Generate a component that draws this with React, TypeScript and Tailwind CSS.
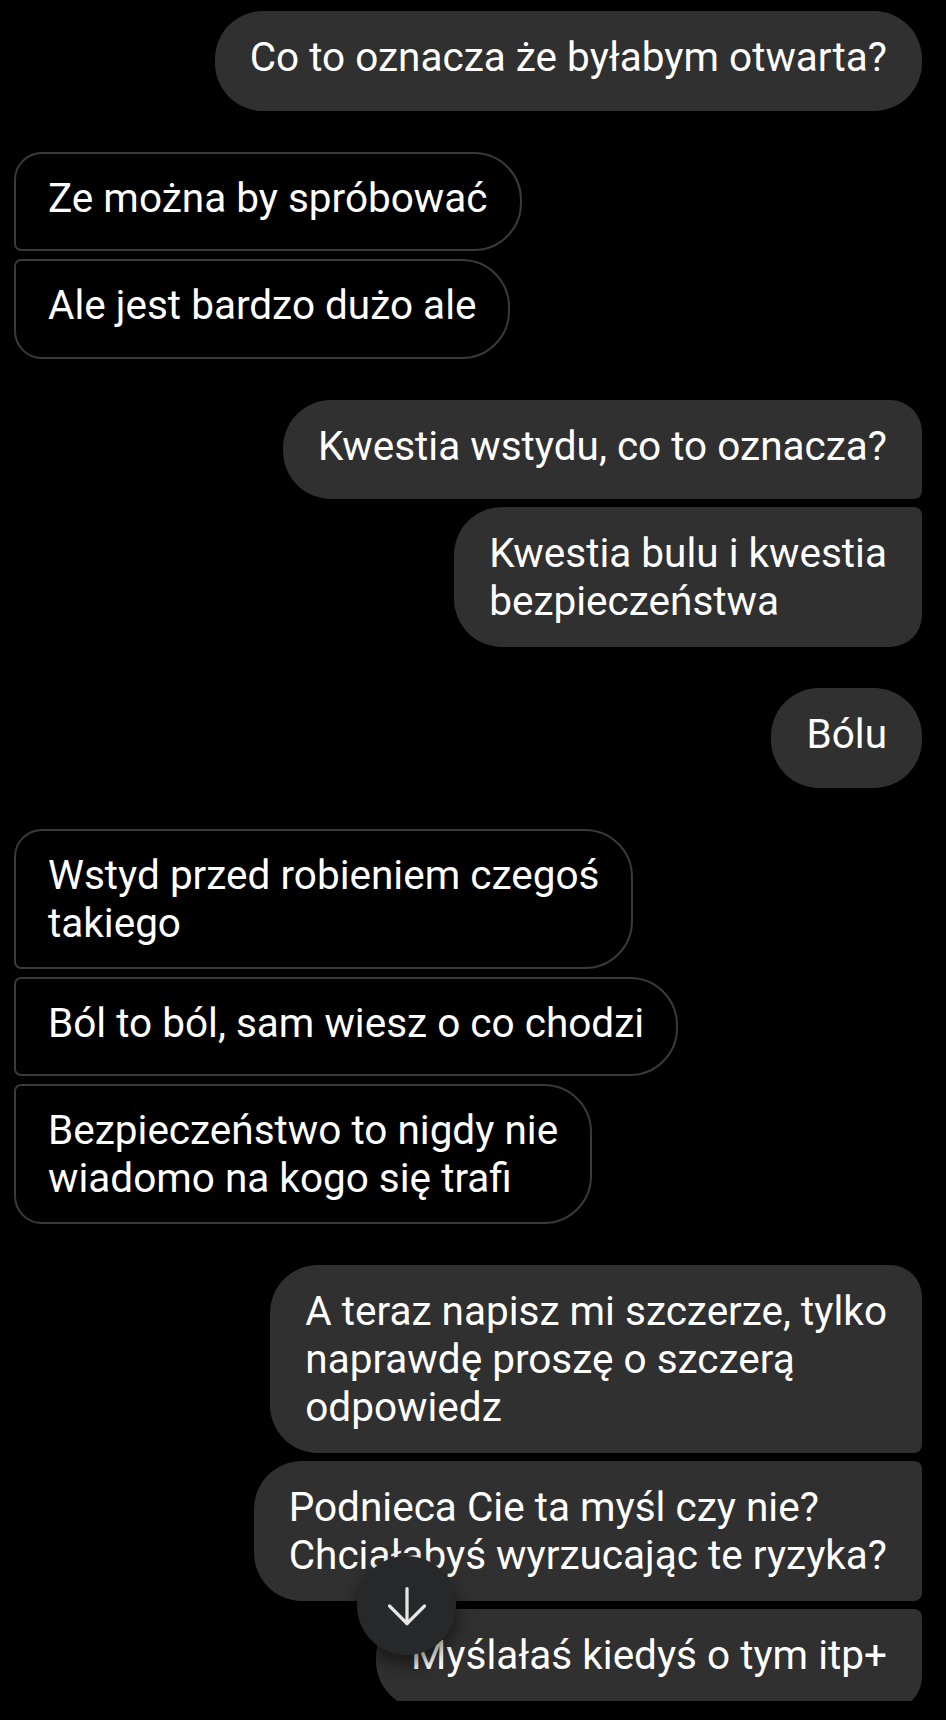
import React from 'react';
import { ArrowDown } from 'lucide-react';

type Side = 'in' | 'out';

interface Bubble {
  lines: string[];
  corners: string;
}

interface Group {
  side: Side;
  bubbles: Bubble[];
}

// corner sets: out = my messages (right, filled), in = received (left, outlined)
const OUT_SINGLE = 'rounded-[48px]';
const OUT_FIRST = 'rounded-l-[48px] rounded-tr-[32px] rounded-br-[8px]';
const OUT_MID = 'rounded-l-[48px] rounded-r-[8px]';
const OUT_LAST = 'rounded-l-[48px] rounded-tr-[8px] rounded-br-[32px]';
const IN_FIRST = 'rounded-r-[48px] rounded-tl-[28px] rounded-bl-[7px]';
const IN_MID = 'rounded-r-[48px] rounded-l-[7px]';
const IN_LAST = 'rounded-r-[48px] rounded-tl-[7px] rounded-bl-[28px]';

const groups: Group[] = [
  { side: 'out', bubbles: [{ lines: ['Co to oznacza że byłabym otwarta?'], corners: OUT_SINGLE }] },
  {
    side: 'in',
    bubbles: [
      { lines: ['Ze można by spróbować'], corners: IN_FIRST },
      { lines: ['Ale jest bardzo dużo ale'], corners: IN_LAST },
    ],
  },
  {
    side: 'out',
    bubbles: [
      { lines: ['Kwestia wstydu, co to oznacza?'], corners: OUT_FIRST },
      { lines: ['Kwestia bulu i kwestia', 'bezpieczeństwa'], corners: OUT_LAST },
    ],
  },
  { side: 'out', bubbles: [{ lines: ['Bólu'], corners: OUT_SINGLE }] },
  {
    side: 'in',
    bubbles: [
      { lines: ['Wstyd przed robieniem czegoś', 'takiego'], corners: IN_FIRST },
      { lines: ['Ból to ból, sam wiesz o co chodzi'], corners: IN_MID },
      { lines: ['Bezpieczeństwo to nigdy nie', 'wiadomo na kogo się trafi'], corners: IN_LAST },
    ],
  },
  {
    side: 'out',
    bubbles: [
      { lines: ['A teraz napisz mi szczerze, tylko', 'naprawdę proszę o szczerą', 'odpowiedz'], corners: OUT_FIRST },
      { lines: ['Podnieca Cie ta myśl czy nie?', 'Chciałabyś wyrzucając te ryzyka?'], corners: OUT_MID },
      { lines: ['Myślałaś kiedyś o tym itp+'], corners: OUT_LAST },
    ],
  },
];

const MessageBubble: React.FC<{ side: Side; bubble: Bubble }> = ({ side, bubble }) => {
  const base = 'min-h-[99.5px] text-[40.5px] leading-[48px] text-white whitespace-nowrap';
  const look =
    side === 'out'
      ? 'bg-[#303030] px-[35px] pt-[22px] pb-[22px]'
      : 'bg-black border-2 border-[#3a3a3a] px-[32px] pt-[20px] pb-[20px]';
  return (
    <div className={`${base} ${look} ${bubble.corners}`}>
      {bubble.lines.map((line, i) => (
        <div key={i}>{line}</div>
      ))}
    </div>
  );
};

export default function App() {
  return (
    <div className="w-[946px] h-[1720px] bg-black font-['Roboto',sans-serif] relative overflow-hidden">
      <div className="h-[1701px] overflow-hidden pt-[11px] pl-[14px] pr-[24px] flex flex-col gap-[41px]">
        {groups.map((g, gi) => (
          <div
            key={gi}
            className={`flex flex-col gap-2 ${g.side === 'out' ? 'items-end' : 'items-start'}`}
          >
            {g.bubbles.map((b, bi) => (
              <MessageBubble key={bi} side={g.side} bubble={b} />
            ))}
          </div>
        ))}
      </div>

      {/* scroll-to-bottom button */}
      <button className="absolute left-[357px] top-[1556px] w-[99px] h-[99px] rounded-full bg-[#27282a] shadow-[0_8px_18px_rgba(0,0,0,0.55)] flex items-center justify-center text-[#e6e6e6]">
        <ArrowDown size={60} strokeWidth={1.3} />
      </button>
    </div>
  );
}
